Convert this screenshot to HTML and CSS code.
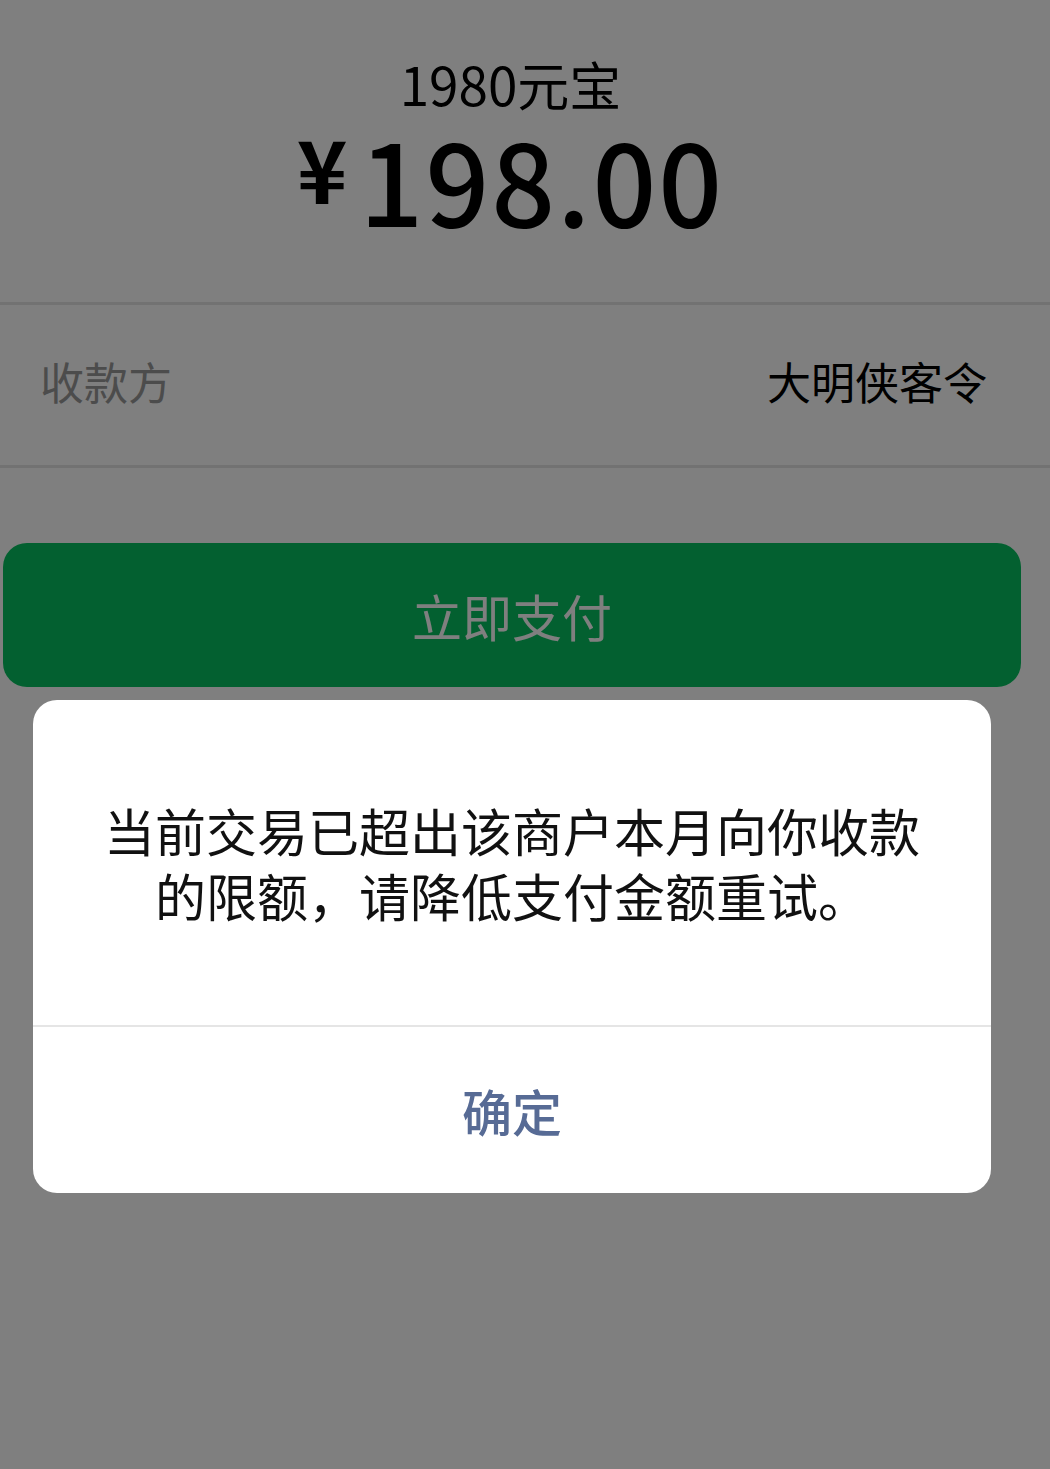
FILE: index.html
```html
<!DOCTYPE html>
<html lang="zh-CN">
<head>
    <meta charset="UTF-8">
    <meta name="viewport" content="width=device-width, initial-scale=1.0">
    <title>立即支付</title>
    <link rel="stylesheet" href="styles.css">
</head>
<body>
    <main class="pay-page">
        <section class="summary">
            <div class="goods"><span class="goods-num">1980</span><span class="goods-unit">元宝</span></div>
            <div class="amount">
                <span class="currency">¥</span>
                <span class="amount-value">198.00</span>
            </div>
        </section>

        <div class="info-row">
            <span class="info-label">收款方</span>
            <span class="info-value">大明侠客令</span>
        </div>

        <button class="pay-button">立即支付</button>
    </main>

    <div class="mask"></div>

    <div class="dialog">
        <div class="dialog-body">
            <p>当前交易已超出该商户本月向你收款的限额，请降低支付金额重试。</p>
        </div>
        <div class="dialog-footer">
            <button class="dialog-confirm">确定</button>
        </div>
    </div>
</body>
</html>
```

FILE: styles.css
```css
/* Basic Reset */
* {
    margin: 0;
    padding: 0;
    box-sizing: border-box;
    font-family: "Noto Sans CJK SC", sans-serif;
}

body {
    background-color: #fff;
    color: #000;
    height: 1469px;
}

/* Order summary */
.summary {
    height: 305px;
    padding: 53px 29px 0 0;
    border-bottom: 3px solid #e5e5e5;
    display: flex;
    flex-direction: column;
    align-items: center;
}

.goods {
    height: 60px;
    line-height: 60px;
}

.goods-num {
    font-size: 53px;
}

.goods-unit {
    font-size: 52px;
}

.amount {
    display: flex;
    align-items: flex-start;
    gap: 12px;
    height: 130px;
    margin-top: 7px;
}

.currency {
    font-size: 86px;
    font-weight: 700;
    line-height: 94px;
}

.amount-value {
    font-size: 112px;
    font-weight: 500;
    line-height: 116px;
    letter-spacing: 2px;
}

/* Payee row */
.info-row {
    height: 163px;
    padding: 0 63px 8px 40px;
    border-bottom: 3px solid #e5e5e5;
    display: flex;
    align-items: center;
    justify-content: space-between;
    font-size: 44px;
}

.info-label {
    color: #999;
}

.pay-button {
    display: block;
    width: calc(100% - 32px);
    height: 144px;
    margin: 75px 29px 0 3px;
    border: none;
    border-radius: 24px;
    background: #07c160;
    color: #fff;
    font-size: 50px;
}

/* Alert dialog */
.mask {
    position: fixed;
    top: 0;
    left: 0;
    right: 0;
    bottom: 0;
    background: rgba(0, 0, 0, 0.5);
}

.dialog {
    position: fixed;
    top: 700px;
    left: 33px;
    width: 958px;
    background: #fff;
    border-radius: 24px;
    overflow: hidden;
}

.dialog-body {
    height: 327px;
    padding: 0 56px;
    border-bottom: 2px solid #e5e5e5;
    display: flex;
    align-items: center;
    justify-content: center;
    text-align: center;
    font-size: 51px;
    line-height: 65px;
    color: #111;
}

.dialog-footer {
    height: 166px;
}

.dialog-confirm {
    width: 100%;
    height: 100%;
    border: none;
    background: none;
    color: #576b95;
    font-size: 50px;
    font-weight: 500;
}
```
